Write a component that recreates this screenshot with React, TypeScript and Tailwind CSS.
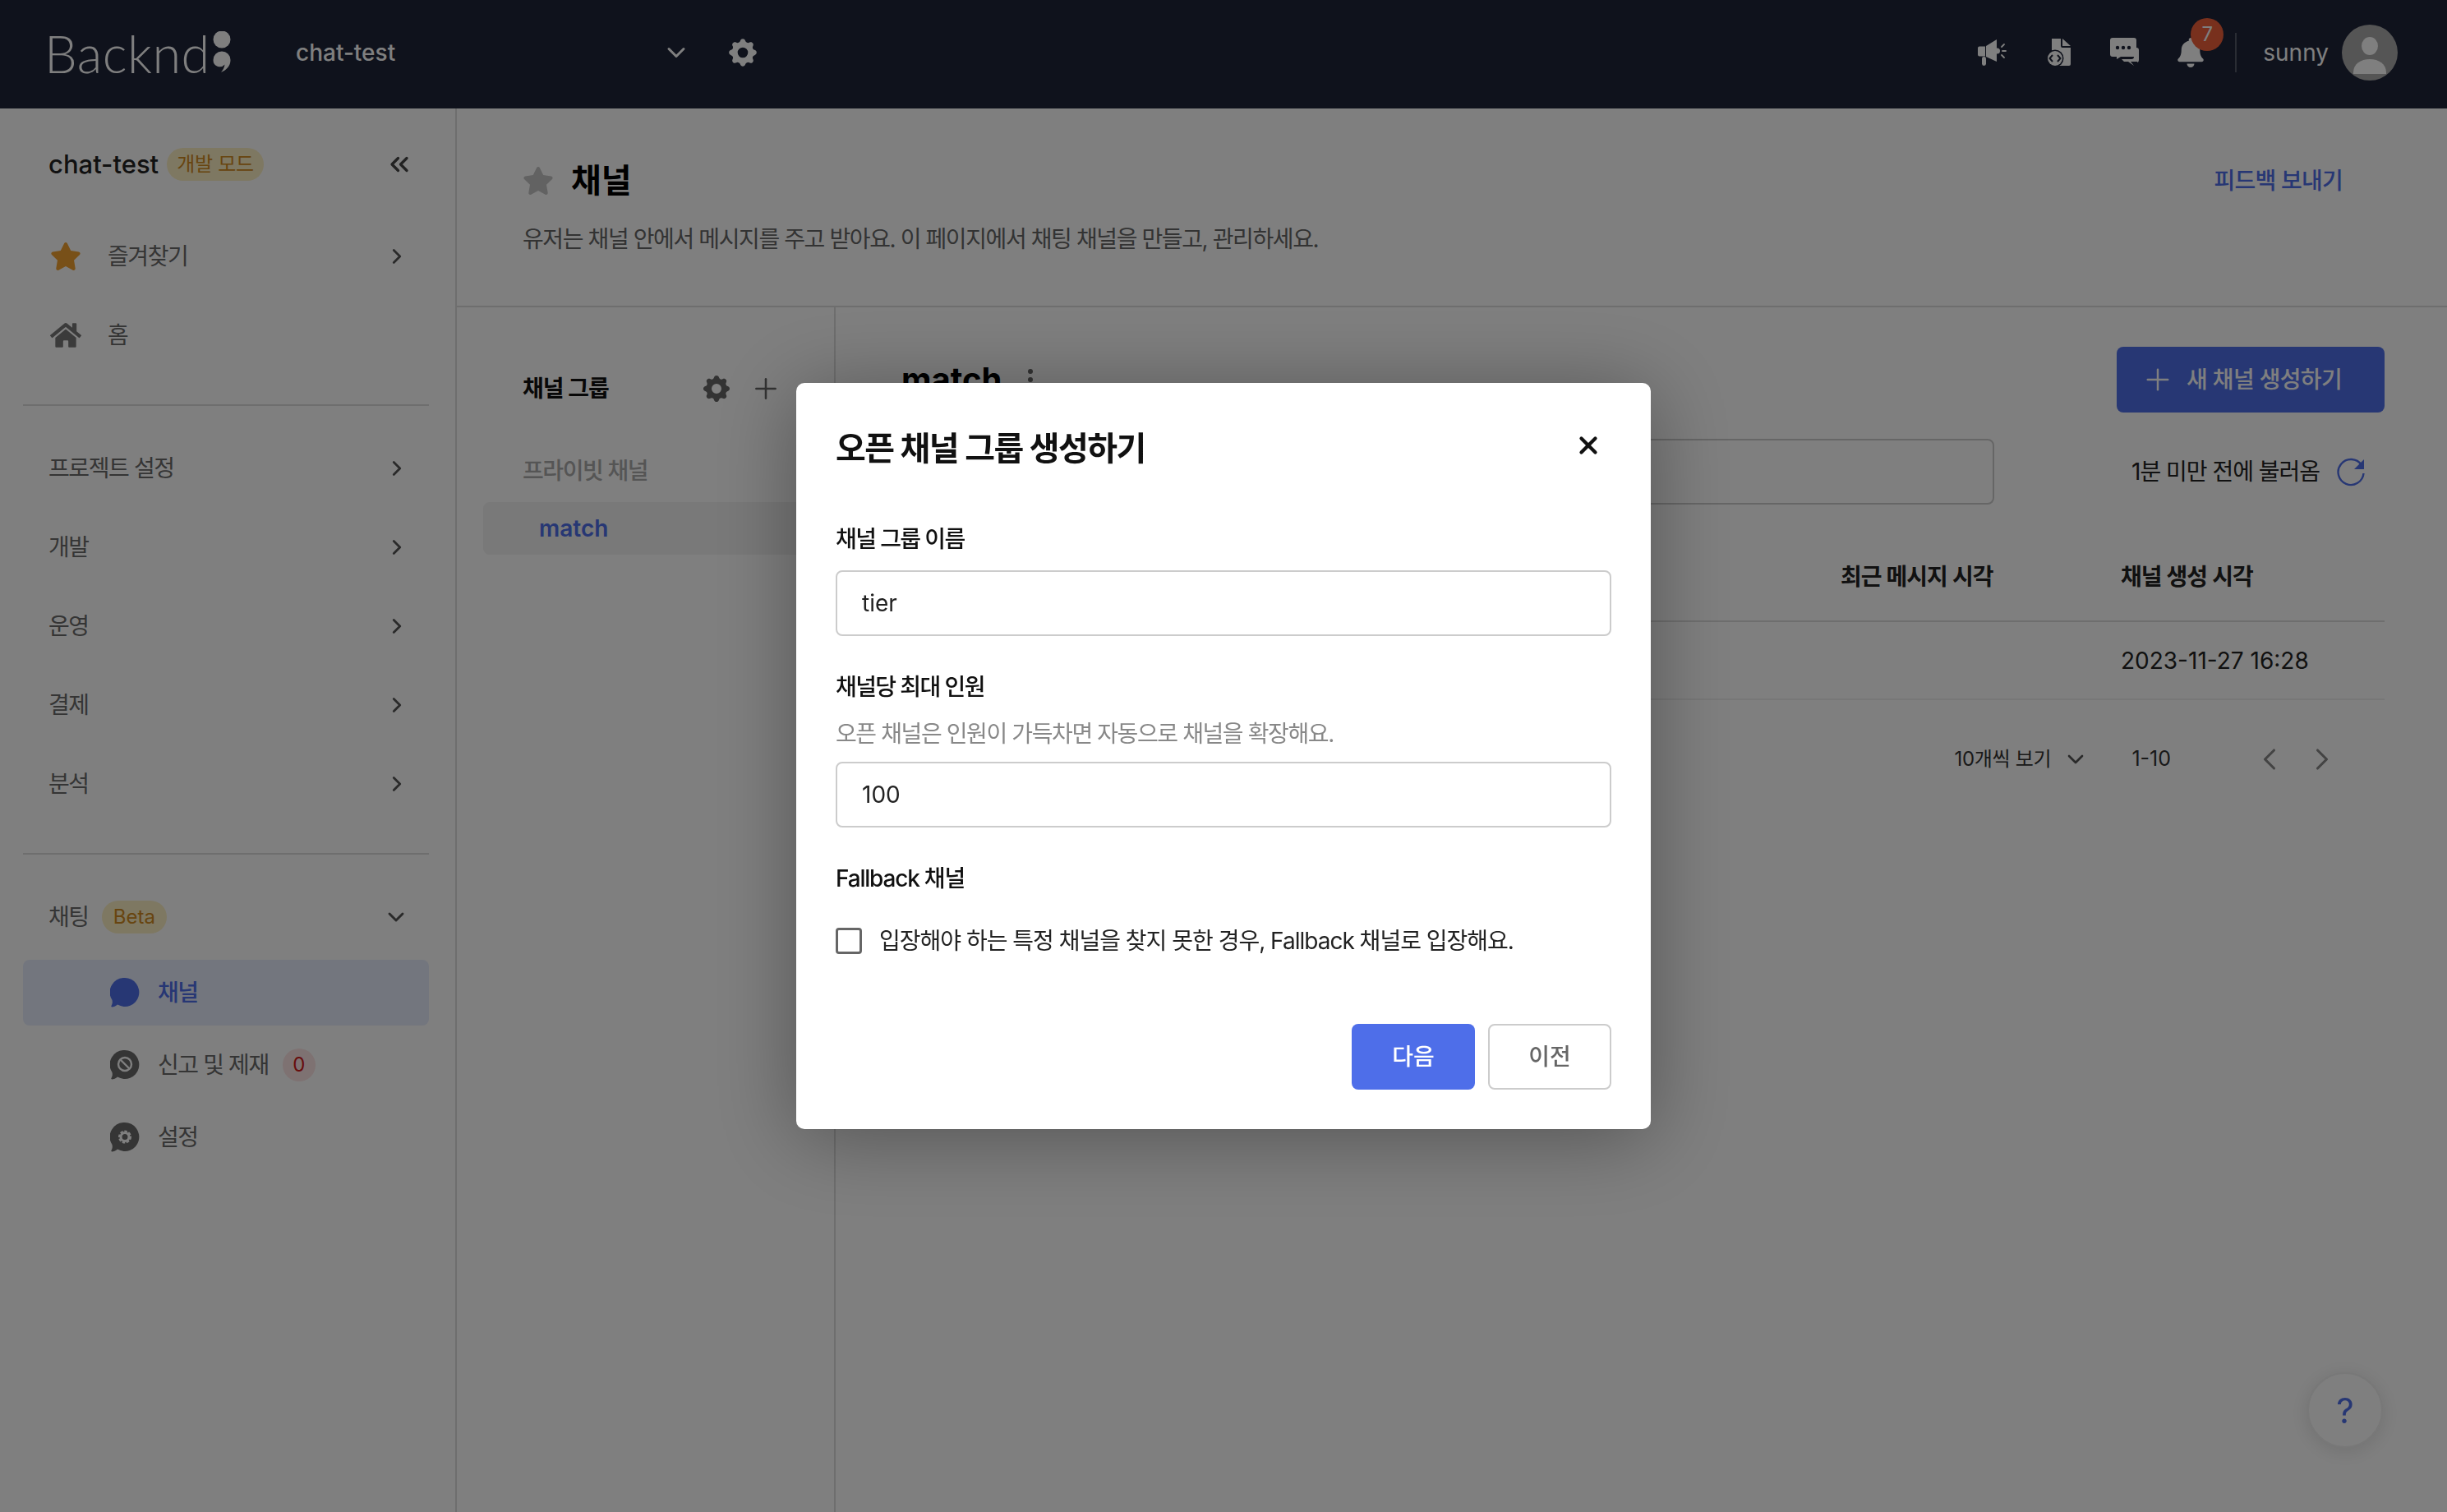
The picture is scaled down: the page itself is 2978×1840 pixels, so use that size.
import React from "react";
import { FaStar, FaHome, FaBell } from "react-icons/fa";
import { HiCog } from "react-icons/hi";
import { LuChevronRight, LuChevronLeft, LuChevronDown, LuChevronsLeft, LuPlus, LuX } from "react-icons/lu";

const font = "font-['Inter','Noto_Sans_CJK_KR',sans-serif]";

function Megaphone() {
  return (
    <svg width="36" height="34" viewBox="0 0 36 34" fill="#fff">
      <path d="M1 11.5a2 2 0 0 1 2-2h7v12H3a2 2 0 0 1-2-2z" />
      <path d="M11 9 L24 1 V28 L11 22z" />
      <circle cx="24.5" cy="15" r="3.5" />
      <rect x="6" y="22" width="5" height="11" rx="2.4" />
      <path d="M30 10l3-3M31 15h4M30 20l3 3" stroke="#fff" strokeWidth="1.8" strokeLinecap="round" />
    </svg>
  );
}
function FileCode() {
  return (
    <svg width="32" height="36" viewBox="0 0 32 36">
      <path d="M7 1h11v9a2 2 0 0 0 2 2h10v20a2 2 0 0 1-2 2H9a2 2 0 0 1-2-2z" fill="#fff" />
      <path d="M20 1l10 9H20z" fill="#fff" />
      <circle cx="11" cy="25" r="10.5" fill="#1e2438" />
      <circle cx="11" cy="25" r="9" fill="#fff" />
      <path d="M8 21l-3.5 4L8 29M14 21l3.5 4-3.5 4" stroke="#1e2438" strokeWidth="2" fill="none" />
    </svg>
  );
}
function Chats() {
  return (
    <svg width="36" height="36" viewBox="0 0 36 36" fill="#fff">
      <path d="M29 12h3a3 3 0 0 1 3 3v12a3 3 0 0 1-2 3v-1l-8 0 4 5-7-5h-5l-3-3h12a3 3 0 0 0 3-3z" />
      <path d="M3 0h26a3 3 0 0 1 3 3v17a3 3 0 0 1-3 3H13l-5 3v-3H3a3 3 0 0 1-3-3V3a3 3 0 0 1 3-3z" />
      <circle cx="9" cy="12" r="2.2" fill="#1e2438" /><circle cx="16" cy="12" r="2.2" fill="#1e2438" /><circle cx="23" cy="12" r="2.2" fill="#1e2438" />
    </svg>
  );
}
function ChatIcon({ color, children }: { color: string; children?: React.ReactNode }) {
  return (
    <svg width="36" height="36" viewBox="0 0 36 36" className="shrink-0">
      <path d="M18 0a17.5 17.5 0 1 1-9 32.6C7 34.400 4 35.500 2.500 35.500c-1 0-1.500-.7-1-1.600C3 31.500 3 29.500 2.500 27A17.500 17.500 0 0 1 18 0z" fill={color} />
      {children}
    </svg>
  );
}
function NavRow({ label, mt }: { label: string; mt: string }) {
  return (
    <div className={`flex h-[80px] items-center justify-between pl-[31px] pr-[24px] text-[28px] text-[#6a6a6a] ${mt}`}>
      <span>{label}</span>
      <LuChevronRight size={30} color="#555" strokeWidth={2.2} />
    </div>
  );
}

export default function App() {
  return (
    <div className={`flex h-[1840px] w-[2978px] flex-col overflow-hidden bg-white ${font}`}>
      <header className="flex h-[132px] shrink-0 items-center bg-[#1e2438] pb-[4px] pl-[59px] pr-[60px]">
        <div className="flex w-[301px] items-center">
          <span className="-ml-[5px] font-['Lato',sans-serif] text-[63px] font-light leading-none tracking-[0.5px] text-white">Backnd</span>
          <svg width="22" height="50" viewBox="0 0 22 50" fill="#fff" className="ml-[3px] -mt-[2px]">
            <circle cx="11" cy="10" r="10.500" />
            <path d="M11 24.500a10.500 10.500 0 0 1 10.500 10.500C21.500 42 17 47 10 50c2.500-3 4-6 4.500-9.500A8 8 0 0 1 .5 35 10.500 10.500 0 0 1 11 24.500z" />
          </svg>
        </div>
        <div className="flex w-[481px] items-center justify-between">
          <span className="text-[28px] font-medium text-white">chat-test</span>
          <LuChevronDown size={36} color="#fff" strokeWidth={2} />
        </div>
        <HiCog size={42} color="#fff" className="ml-[42px]" />
        <div className="ml-auto flex items-center">
          <Megaphone />
          <div className="ml-[48px]"><FileCode /></div>
          <div className="ml-[46px]"><Chats /></div>
          <div className="relative ml-[44px]">
            <FaBell size={36} color="#fff" />
            <span className="absolute -right-[22px] -top-[24px] flex h-[40px] w-[40px] items-center justify-center rounded-full bg-[#f0603a] text-[24px] text-white">7</span>
          </div>
          <div className="ml-[36px] h-[48px] w-[2px] bg-[#555a68]" />
          <span className="ml-[32px] text-[28px] font-normal text-white">sunny</span>
          <div className="ml-[16px] flex h-[68px] w-[68px] items-end justify-center overflow-hidden rounded-full bg-[#aaaaaa]">
            <svg width="40" height="56" viewBox="0 0 40 56" fill="#fff">
              <ellipse cx="20" cy="14" rx="10" ry="11" />
              <path d="M0 46C0 36 9 30 20 30s20 6 20 16v2H0z" />
            </svg>
          </div>
        </div>
      </header>

      <div className="flex min-h-0 flex-1">
        <aside className="h-full w-[556px] shrink-0 border-r-2 border-[#dddddd] pl-[28px] pr-[32px] pt-[28px] tracking-[-1.4px]">
          <div className="flex h-[80px] items-center pl-[31px] pr-[26px]">
            <span className="text-[31px] font-medium tracking-normal text-[#222]">chat-test</span>
            <span className="ml-[10px] flex h-[40px] items-center rounded-full bg-[#fdf0c4] px-[12px] text-[24px] tracking-[-0.3px] text-[#d08a20]">개발 모드</span>
            <LuChevronsLeft size={36} color="#444" strokeWidth={2.2} className="ml-auto -mr-[8px]" />
          </div>
          <div className="mt-[32px] flex h-[80px] items-center justify-between pl-[33px] pr-[24px] text-[28px] text-[#6a6a6a]">
            <span className="flex items-center">
              <FaStar size={38} color="#f0a030" />
              <span className="ml-[32px]">즐겨찾기</span>
            </span>
            <LuChevronRight size={30} color="#555" strokeWidth={2.2} />
          </div>
          <div className="mt-[16px] flex h-[80px] items-center pl-[33px] text-[28px] text-[#6a6a6a]">
            <FaHome size={38} color="#777" />
            <span className="ml-[32px]">홈</span>
          </div>
          <div className="mt-[44px] h-[2px] bg-[#dddddd]" />
          <NavRow label="프로젝트 설정" mt="mt-[36px]" />
          <NavRow label="개발" mt="mt-[16px]" />
          <NavRow label="운영" mt="mt-[16px]" />
          <NavRow label="결제" mt="mt-[16px]" />
          <NavRow label="분석" mt="mt-[16px]" />
          <div className="mt-[44px] h-[2px] bg-[#dddddd]" />
          <div className="mt-[36px] flex h-[80px] items-center pl-[31px] pr-[24px] text-[28px] text-[#6a6a6a]">
            <span>채팅</span>
            <span className="ml-[16px] flex h-[40px] items-center rounded-full bg-[#fdf0c4] px-[14px] text-[24px] tracking-normal text-[#d08a20]">Beta</span>
            <LuChevronDown size={32} color="#555" strokeWidth={2.2} className="ml-auto" />
          </div>
          <div className="mt-[12px] flex h-[80px] items-center rounded-[8px] bg-[#e6edfd] pl-[106px] text-[28px] font-medium text-[#4e6ee9]">
            <ChatIcon color="#4e6ee9" />
            <span className="ml-[22px]">채널</span>
          </div>
          <div className="mt-[8px] flex h-[80px] items-center pl-[106px] text-[28px] text-[#6a6a6a]">
            <ChatIcon color="#6a6a6a">
              <circle cx="18" cy="17" r="8" fill="none" stroke="#fff" strokeWidth="2.4" />
              <path d="M12.500 11.500l11 11" stroke="#fff" strokeWidth="2.4" />
            </ChatIcon>
            <span className="ml-[22px]">신고 및 제재</span>
            <span className="ml-[17px] flex h-[40px] w-[40px] items-center justify-center rounded-full bg-[#fde4e4] text-[24px] tracking-normal text-[#d01818]">0</span>
          </div>
          <div className="mt-[8px] flex h-[80px] items-center pl-[106px] text-[28px] text-[#6a6a6a]">
            <ChatIcon color="#6a6a6a">
              <circle cx="18" cy="17.500" r="6" fill="none" stroke="#fff" strokeWidth="4" strokeDasharray="3 1.500" />
              <circle cx="18" cy="17.500" r="5" fill="none" stroke="#fff" strokeWidth="3" />
            </ChatIcon>
            <span className="ml-[22px]">설정</span>
          </div>
        </aside>

        <main className="flex min-w-0 flex-1 flex-col">
          <section className="h-[242px] shrink-0 border-b-2 border-[#dddddd] pl-[80px] pr-[127px] pt-[64px]">
            <div className="flex h-[48px] items-center">
              <FaStar size={38} color="#c4c4c4" />
              <span className="ml-[21px] text-[40px] font-bold text-[#000]">채널</span>
              <span className="ml-auto text-[28px] font-medium tracking-[-0.8px] text-[#4e6ee9]">피드백 보내기</span>
            </div>
            <p className="mt-[27px] flex h-[40px] items-center text-[28px] tracking-[-1.4px] text-[#666]">유저는 채널 안에서 메시지를 주고 받아요. 이 페이지에서 채팅 채널을 만들고, 관리하세요.</p>
          </section>
          <div className="flex min-h-0 flex-1">
            <div className="w-[461px] shrink-0 border-r-2 border-[#dddddd] pt-[79px]">
              <div className="flex h-[40px] items-center pl-[80px] pr-[63px]">
                <span className="text-[28px] font-semibold tracking-[-1.1px] text-[#111]">채널 그룹</span>
                <HiCog size={40} color="#666" className="ml-auto" />
                <LuPlus size={40} color="#666" strokeWidth={1.5} className="ml-[20px]" />
              </div>
              <div className="mt-[60px] flex h-[40px] items-center pl-[80px] text-[28px] font-medium tracking-[-1.4px] text-[#aaa]">프라이빗 채널</div>
              <div className="ml-[32px] mt-[18px] flex h-[64px] items-center rounded-[8px] bg-[#f2f2f2] pl-[68px] text-[28px] font-semibold text-[#4e6ee9]">match</div>
            </div>
            <div className="min-w-0 flex-1 pl-[80px] pr-[76px] pt-[48px]">
              <div className="flex h-[80px] items-center">
                <span className="text-[40px] font-bold text-black">match</span>
                <span className="ml-[32px] flex flex-col gap-[4px]">
                  <i className="h-[6px] w-[6px] rounded-full bg-[#666]" />
                  <i className="h-[6px] w-[6px] rounded-full bg-[#666]" />
                  <i className="h-[6px] w-[6px] rounded-full bg-[#666]" />
                </span>
                <button className="ml-auto flex h-[80px] w-[326px] items-center gap-[14px] rounded-[8px] bg-[#4e6ee9] pl-[29px] text-[28px] font-medium tracking-[-0.7px] text-white">
                  <LuPlus size={42} strokeWidth={1.4} />
                  <span>새 채널 생성하기</span>
                </button>
              </div>
              <div className="mt-[32px] flex h-[80px] items-center">
                <div className="h-[80px] w-[1330px] shrink-0 rounded-[8px] border-2 border-[#cccccc]" />
                <span className="ml-[167px] text-[28px] tracking-[-1px] text-[#222]">1분 미만 전에 불러옴</span>
                <svg width="36" height="36" viewBox="0 0 36 36" className="ml-[20px]">
                  <path d="M31 10A15.500 15.500 0 1 0 33.500 20" fill="none" stroke="#4e6ee9" strokeWidth="2.400" />
                  <path d="M34 3v12H22z" fill="#4e6ee9" />
                </svg>
              </div>
              <div className="mt-[30px] flex h-[113px] items-center border-b-2 border-[#dddddd] pt-[4px] text-[28px] font-semibold tracking-[-1px] text-[#222]">
                <span className="ml-auto w-[341px]">최근 메시지 시각</span>
                <span className="w-[321px]">채널 생성 시각</span>
              </div>
              <div className="flex h-[95px] items-center border-b-2 border-[#efefef] text-[28px] text-[#222]">
                <span className="ml-auto w-[321px]">2023-11-27 16:28</span>
              </div>
              <div className="mt-[40px] flex h-[64px] items-center justify-end pr-[54px] text-[24px] text-[#333]">
                <span className="tracking-[-0.3px]">10개씩 보기</span>
                <LuChevronDown size={32} color="#555" strokeWidth={2} className="ml-[14px]" />
                <span className="ml-[52px] text-[25px]">1-10</span>
                <LuChevronLeft size={44} color="#888" strokeWidth={1.7} className="ml-[98px]" />
                <LuChevronRight size={44} color="#888" strokeWidth={1.7} className="ml-[20px]" />
              </div>
            </div>
          </div>
        </main>
      </div>

      <button className="fixed right-[78px] top-[1670px] flex h-[92px] w-[92px] items-center justify-center rounded-full border-2 border-[#f0f0f0] bg-white text-[42px] text-[#4e6ee9] shadow-[0_4px_24px_rgba(0,0,0,0.12)]">?</button>

      <div className="fixed inset-0 flex items-start justify-center bg-black/50 pt-[466px]">
        <div className="flex h-[908px] w-[1040px] flex-col rounded-[10px] bg-white px-[48px] shadow-[0_10px_100px_rgba(0,0,0,0.35)]">
          <div className="mt-[55px] flex h-[50px] items-center justify-between">
            <h2 className="text-[40px] font-bold tracking-[-1.5px] text-[#111]">오픈 채널 그룹 생성하기</h2>
            <LuX size={34} color="#111" strokeWidth={3} className="mr-[11px] -mt-[8px]" />
          </div>
          <label className="mt-[65px] flex h-[40px] items-center text-[28px] font-medium tracking-[-1.6px] text-[#111]">채널 그룹 이름</label>
          <div className="mt-[18px] flex h-[80px] items-center rounded-[8px] border-2 border-[#cccccc] pl-[30px] text-[28px] text-[#222]">tier</div>
          <label className="mt-[42px] flex h-[40px] items-center text-[28px] font-medium tracking-[-1.6px] text-[#111]">채널당 최대 인원</label>
          <p className="mt-[17px] flex h-[40px] items-center text-[28px] tracking-[-1.4px] text-[#888]">오픈 채널은 인원이 가득차면 자동으로 채널을 확장해요.</p>
          <div className="mt-[14px] flex h-[80px] items-center rounded-[8px] border-2 border-[#cccccc] pl-[30px] text-[28px] text-[#222]">100</div>
          <label className="mt-[42px] flex h-[40px] items-center text-[28px] font-medium tracking-[-1.2px] text-[#111]">Fallback 채널</label>
          <div className="mt-[40px] flex h-[32px] items-center">
            <span className="h-[32px] w-[32px] rounded-[4px] border-[3px] border-[#666]" />
            <span className="ml-[21px] text-[28px] tracking-[-1px] text-[#222]">입장해야 하는 특정 채널을 찾지 못한 경우, Fallback 채널로 입장해요.</span>
          </div>
          <div className="mt-[85px] flex justify-end gap-[16px]">
            <button className="h-[80px] w-[150px] rounded-[8px] bg-[#4e6ee9] text-[28px] font-medium text-white">다음</button>
            <button className="h-[80px] w-[150px] rounded-[8px] border-2 border-[#cccccc] bg-white text-[28px] font-medium text-[#666]">이전</button>
          </div>
        </div>
      </div>
    </div>
  );
}
